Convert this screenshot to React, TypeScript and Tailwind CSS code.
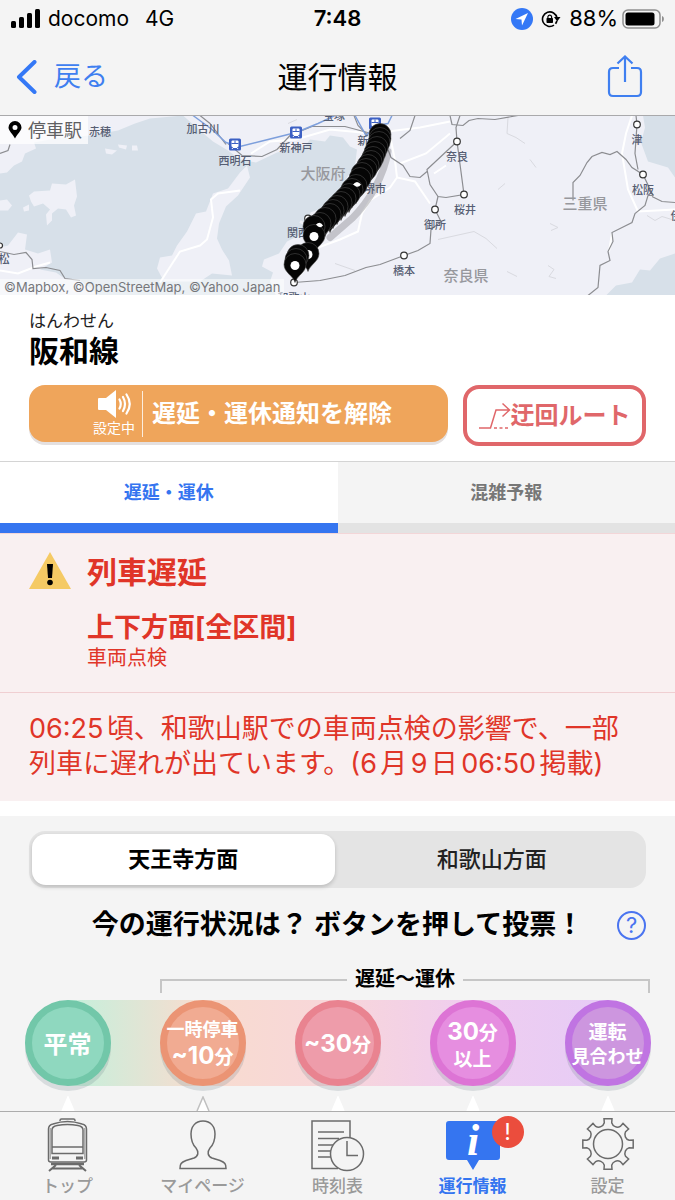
import { useState, type ReactNode } from 'react';

type Station = {
  name: string;
  x: number;
  y: number;
  textX: number;
  textY: number;
};

type Vote = {
  id: string;
  label: ReactNode;
  colors: string;
  selected?: boolean;
};

const stations: Station[] = [
  { name: '奈良', x: 457, y: 26, textX: 457, textY: 45 },
  { name: '桜井', x: 464, y: 79, textX: 465, textY: 98 },
  { name: '御所', x: 435, y: 94, textX: 435, textY: 113 },
  { name: '橋本', x: 404, y: 140, textX: 404, textY: 159 },
  { name: '津', x: 637, y: 9, textX: 637, textY: 28 },
  { name: '松阪', x: 643, y: 59, textX: 643, textY: 78 },
  { name: '和歌山', x: 294, y: 167, textX: 294, textY: 186 },
];

const bulletStations = [
  [235, 29],
  [296, 17],
  [375, 8],
];

// The line runs from Tennoji (top) down to Wakayama.
const pinRoute = [
  [380, 20], [380, 24], [379, 28], [377, 33], [375, 38], [373, 43], [371, 47],
  [368, 51], [366, 55], [362, 59], [360, 64], [356, 71], [352, 75], [349, 80],
  [345, 84], [341, 88], [337, 92], [333, 96], [330, 100], [325, 104], [320, 109],
  [314, 112], [314, 121], [308, 139], [298, 141], [296, 145], [295, 150],
];
const openPins = [22, 23, 26];

const votes: Vote[] = [
  {
    id: 'normal',
    label: <span className="text-[24px] leading-7">平常</span>,
    colors: 'border-[#72c7a9] bg-[#8fd8bf]',
  },
  {
    id: 'stop',
    label: (
      <>
        <span className="text-[18px] leading-6">一時停車</span>
        <span className="text-[24px] leading-7">
          ~10<span className="text-[19px]">分</span>
        </span>
      </>
    ),
    colors: 'border-[#eb9474] bg-[#f1ab92]',
    selected: true,
  },
  {
    id: 'under30',
    label: (
      <span className="text-[24px] leading-7">
        ~30<span className="text-[19px]">分</span>
      </span>
    ),
    colors: 'border-[#e98390] bg-[#ee9caa]',
  },
  {
    id: 'over30',
    label: (
      <>
        <span className="text-[24px] leading-7">
          30<span className="text-[19px]">分</span>
        </span>
        <span className="text-[19px] leading-6">以上</span>
      </>
    ),
    colors: 'border-[#dd74d5] bg-[#e68ee0]',
  },
  {
    id: 'suspended',
    label: (
      <>
        <span className="text-[19px] leading-6">運転</span>
        <span className="text-[18px] leading-6">見合わせ</span>
      </>
    ),
    colors: 'border-[#c074e2] bg-[#cd96df]',
  },
];

function StatusBar() {
  return (
    <div className="grid h-[37px] grid-cols-3 items-center px-[10px] text-[22px]">
      <div className="flex items-center gap-2 text-[21px]">
        <svg viewBox="0 0 30 20" className="h-5 w-[30px]" aria-hidden="true">
          <rect x="1" y="12" width="5" height="7" rx="1.5" />
          <rect x="9" y="8" width="5" height="11" rx="1.5" />
          <rect x="17" y="4" width="5" height="15" rx="1.5" />
          <rect x="25" y="0" width="5" height="19" rx="1.5" />
        </svg>
        <span>docomo</span>
        <span className="ml-2">4G</span>
      </div>
      <div className="text-center font-semibold">7:48</div>
      <div className="flex items-center justify-end gap-2">
        <svg viewBox="0 0 22 22" className="size-[22px] shrink-0" aria-hidden="true">
          <circle cx="11" cy="11" r="11" fill="#3478f6" />
          <path d="M17 5 L4.500 11 L10.500 11.500 L11 17.500 Z" fill="#fff" />
        </svg>
        <svg viewBox="0 0 20 18" className="h-[18px] w-5 shrink-0" fill="none" aria-hidden="true">
          <path d="M16 8 A7.300 7.300 0 1 0 13 15.200" stroke="#000" strokeWidth="1.600" />
          <path d="M15.800 11 A7.300 7.300 0 0 1 14.500 13.800" stroke="#000" strokeWidth="1.600" />
          <path d="M13 7 H19.500 L16.200 11.500 Z" fill="#000" />
          <rect x="5.500" y="8" width="6.500" height="5" rx="0.700" fill="#000" />
          <path d="M6.900 8.500 V6.600 A1.900 1.900 0 0 1 10.600 6.600 V8.500" stroke="#000" strokeWidth="1.200" />
        </svg>
        <div className="flex items-center">
          <span>88%</span>
          <svg viewBox="0 0 43 20" className="ml-1 h-5 w-[43px] shrink-0" aria-hidden="true">
            <rect x="1" y="1" width="37" height="18" rx="5" fill="none" stroke="#8e8e8e" strokeWidth="1.500" />
            <rect x="3.500" y="3.500" width="29" height="13" rx="2.500" />
            <path d="M40 7 C42.500 7.500 42.500 12.500 40 13 Z" fill="#8e8e8e" />
          </svg>
        </div>
      </div>
    </div>
  );
}

function NavBar() {
  return (
    <div className="grid h-[78px] grid-cols-3 items-center px-4 pt-0.5">
      <button type="button" className="flex items-center gap-4 text-[27px] text-[#3f7ff0]">
        <svg viewBox="0 0 22 34" className="h-[34px] w-[22px]" fill="none" aria-hidden="true">
          <path d="M18.500 2 L3 17 L18.500 32" stroke="#3478f6" strokeWidth="4" strokeLinecap="round" strokeLinejoin="round" />
        </svg>
        戻る
      </button>
      <h1 className="text-center text-[30px]">運行情報</h1>
      <button type="button" aria-label="共有" className="mr-4 justify-self-end">
        <svg viewBox="0 0 36 44" className="h-11 w-9" fill="none" stroke="#3f7ff0" strokeWidth="2.200" aria-hidden="true">
          <path d="M12 13 H6 Q2 13 2 17 V37 Q2 41 6 41 H30 Q34 41 34 37 V17 Q34 13 30 13 H24" />
          <path d="M18 27 V1.500 M10.500 8.500 L18 1.500 L25.500 8.500" />
        </svg>
      </button>
    </div>
  );
}

function MapPin({ x, y, open }: { x: number; y: number; open: boolean }) {
  return (
    <g transform={`translate(${x} ${y})`}>
      <path
        d="M0 17 C-2 10 -11 7 -11 -1 A11 11 0 0 1 11 -1 C11 7 2 10 0 17 Z"
        fill="#050505"
        stroke="#4b4b4b"
        strokeWidth="0.600"
      />
      {open && <circle r="4.500" fill="#fff" />}
    </g>
  );
}

function RouteMap() {
  return (
    <div className="relative h-[180px] overflow-hidden border-t border-[#a9a9ab] bg-[#eff0f7]">
      <svg
        viewBox="0 0 675 180"
        preserveAspectRatio="xMidYMid slice"
        className="block h-full w-full"
        role="img"
        aria-label="阪和線の停車駅"
      >
        <rect width="675" height="180" fill="#eff0f7" />

        {/* sea */}
        <g fill="#d7e0e9">
          <path d="M0 58 L7 57 L14 50 L22 46 L25 38 L36 33 L34 27 L60 22 L90 20 L118 15 L135 8 L150 3 L183 0 L200 15 L213 26 L228 35 L240 44 L256 47 L277 37 L290 34 L300 29 L304 32 L310 24 L325 26 L330 20 L343 22 L350 31 L357 34 L355 50 L347 62 L343 74 L336 82 L327 92 L310 110 L299 120 L287 126 L279 138 L264 144 L262 151 L273 157 L270 166 L276 180 L100 180 L80 165 L63 162 L56 157 L40 154 L52 147 L50 134 L38 138 L25 134 L27 119 L18 117 L8 130 L0 132 Z" />
          <path d="M643 0 L645 12 L641 27 L648 46 L668 52 L675 62 L675 0 Z" />
          <path d="M675 138 L660 143 L650 155 L640 154 L632 167 L616 170 L606 180 L675 180 Z" />
        </g>

        {/* islands */}
        <g fill="#eff0f7">
          <path d="M247 50 L240 57 L228 73 L213 78 L206 96 L196 98 L187 116 L177 130 L172 140 L160 142 L157 153 L164 166 L200 166 L212 158 L232 160 L229 145 L222 134 L217 123 L219 108 L226 91 L238 80 L250 62 Z" />
          <path d="M29 80 L34 76 L50 75 L52 68 L66 69 L75 64 L77 81 L74 90 L76 100 L71 102 L66 94 L58 93 L52 98 L52 105 L47 110 L46 99 L50 94 L43 88 L34 91 L31 86 Z" />
          <path d="M0 85 L7 84 L12 90 L8 95 L0 95 Z M23 92 L29 89 L29 95 L24 96 Z M105 33 L117 35 L112 39 L106 38 Z M118 29 L127 30 L126 34 L119 32 Z M132 30 L137 30 L138 35 L132 35 Z" />
        </g>
        <path d="M309 106 L312 98 L318 96 M300 106 L306 109" stroke="#eff0f7" strokeWidth="3" fill="none" />

        {/* main roads */}
        <g fill="none" stroke="#fff" strokeWidth="2">
          <path d="M240 75 L218 78 L211 84 L213 102 L207 124 L200 130 L180 136 L160 167" />
          <path d="M388 10 L395 45 L397 62 L415 66 L430 88" />
          <path d="M397 62 L390 72 L370 85 L362 98 L358 116 L340 124 L318 132 L300 160" />
          <path d="M251 38 L270 26 L296 24 L330 14 L372 18 L420 12 L450 6" />
          <path d="M400 48 L426 38 L450 18" />
          <path d="M632 0 L626 18 L622 38 L628 74 L638 96 L675 94" />
          <path d="M0 155 L18 158 L36 151 L50 147" />
          <path d="M434 58 L446 50 M612 118 L609 136" />
        </g>

        {/* faint ridges */}
        <g fill="none" stroke="#d9dae0" strokeWidth="1">
          <path d="M508 2 L507 18 L516 22 L525 28" />
          <path d="M550 108 L558 112 L551 115 M548 150 L554 154 L549 161 L556 163 M507 156 L517 161" />
          <path d="M438 124 L456 120 L474 116 L486 123 L497 133" />
          <path d="M530 44 L536 52 M498 74 L505 68" />
          <path d="M335 148 L355 155 M288 8 L297 4" />
          <path d="M647 100 L655 105 L662 101 L675 105" />
        </g>

        {/* railways */}
        <g fill="none" stroke="#8c8d91" strokeWidth="1.200">
          <path d="M450 0 L452 9 L463 10 L469 5 L478 3 L495 4 L518 0" />
          <path d="M460 0 L456 12 L457 26 L464 79 L446 82 L438 81 L430 69 L427 54 L457 26" />
          <path d="M438 81 L435 94 L441 106 L431 114 L430 128 L418 135 L404 140 L380 149 L366 152 L345 160 L320 165 L294 167" />
          <path d="M427 56 L420 62 L410 61 L403 50 L391 42 L388 34" />
          <path d="M400 23 L410 15 L415 0" />
          <path d="M228 28 L242 40 L262 41 L277 34 L290 20 L312 11 L345 11 L375 19" />
          <path d="M573 85 L573 67 L580 60 L587 47 L592 41 L602 37 L610 39 L617 36 L626 44 L632 52 L643 59 L653 80 L648 80 L645 90 L635 98 L632 107 L612 117 L613 126 L608 136 L610 145 L600 150 L598 172 L588 180" />
          <path d="M636 0 L637 9 L635 38 L638 54 M652 81 L662 86 L675 87" />
          <path d="M0 136 L14 139 L26 137 L32 144 L33 153 L46 152 L60 155 L65 163 L80 165" />
          <path d="M0 38 L8 35 L10 29 M200 0 L210 8 L226 29" />
          <path d="M354 0 L358 10 L368 20" />
        </g>
        <g fill="none" stroke="#7d9fdc" strokeWidth="1.400">
          <path d="M193 0 L212 14 L226 27 L240 31 L268 24 L296 17 L318 8 L335 0" />
          <path d="M355 0 L366 20 L376 10 L388 8 L392 0" />
        </g>

        {/* prefectures */}
        <g fill="#97989d" fontSize="15" fontWeight="500" textAnchor="middle" fontFamily="'Noto Sans CJK JP', sans-serif">
          <text x="323" y="63">大阪府</text>
          <text x="585" y="93">三重県</text>
          <text x="466" y="165">奈良県</text>
        </g>

        {/* stations */}
        <g fill="#565e73" fontSize="11" fontWeight="500" textAnchor="middle" fontFamily="'Noto Sans CJK JP', sans-serif">
          <text x="100" y="20">赤穂</text>
          <text x="203" y="17">加古川</text>
          <text x="235" y="49">西明石</text>
          <text x="296" y="36">新神戸</text>
          <text x="334" y="4">宝塚</text>
          <text x="363" y="29">新</text>
          <text x="375" y="77">堺市</text>
          <text x="298" y="121">関西</text>
          <text x="4" y="147">松</text>
          <text x="676" y="104">伊</text>
          {stations.map((station) => (
            <text key={station.name} x={station.textX} y={station.textY}>
              {station.name}
            </text>
          ))}
        </g>
        <g fill="#fff" stroke="#333" strokeWidth="1.200">
          {stations.map((station) => (
            <circle key={station.name} cx={station.x} cy={station.y} r="3.300" />
          ))}
          <circle cx="308" cy="103" r="3.300" />
          <circle cx="0" cy="130" r="2.500" />
        </g>
        {bulletStations.map(([x, y]) => (
          <g key={x} transform={`translate(${x} ${y})`}>
            <rect x="-6" y="-6" width="12" height="12" rx="1.500" fill="#3c60c4" />
            <rect x="-3.500" y="-4" width="7" height="6.500" rx="1" fill="#fff" />
            <path d="M-3.500 -1 H3.500 M0 -4 V-1" stroke="#3c60c4" />
            <path d="M-3 4.500 L-2 3 H2 L3 4.500" stroke="#fff" fill="none" />
          </g>
        ))}

        <path
          d="M388 36 C384 60 370 85 352 103 L330 122"
          fill="none"
          stroke="#5c5c62"
          strokeOpacity="0.300"
          strokeWidth="7"
          strokeLinecap="round"
        />
        {pinRoute.map(([x, y], index) => (
          <MapPin key={index} x={x} y={y} open={openPins.includes(index)} />
        ))}
        {/* slivers of white left between overlapping pins */}
        <path d="M353 69 Q357 64 361 69 Q359 72 356 71 Z M316 109 Q320 105 323 110 Q321 113 318 111 Z" fill="#fff" />
      </svg>

      <div className="absolute left-0 top-0 flex h-7 items-center gap-1.5 bg-white/75 pl-2 pr-1.5 text-[18px] text-[#5f5f62]">
        <svg viewBox="0 0 14 18" className="h-[18px] w-3.5" aria-hidden="true">
          <path fill="#000" fillRule="evenodd" d="M7 0 A6.500 6.500 0 0 0 0.500 6.500 C0.500 10 5 13 7 17.500 C9 13 13.500 10 13.500 6.500 A6.500 6.500 0 0 0 7 0 Z M7 4 A2.500 2.500 0 1 1 7 9 A2.500 2.500 0 1 1 7 4 Z" />
        </svg>
        停車駅
      </div>
      <div className="absolute bottom-0 left-0 bg-white/50 pl-1 pr-1 text-[13px] leading-4 text-[#76777b]">
        ©Mapbox, ©OpenStreetMap, ©Yahoo Japan
      </div>
    </div>
  );
}

function LineHeader() {
  return (
    <section className="px-[29px] pb-[15px] pt-[14px]">
      <p className="text-[17px] leading-6 text-[#222]">はんわせん</p>
      <h2 className="text-[30px] font-bold leading-9">阪和線</h2>
      <div className="mt-4 flex items-start gap-[15px]">
        <button
          type="button"
          className="flex h-[57px] flex-1 items-center justify-center gap-[7px] rounded-2xl bg-[#efa55b] pl-2 text-white shadow-[0_3px_0_#e4e0e0]"
        >
          <span className="flex flex-col items-center">
            <svg viewBox="0 0 34 28" className="h-7 w-[34px]" fill="none" stroke="#fff" strokeWidth="2.200" strokeLinecap="round" aria-hidden="true">
              <path d="M2 8 H9 L19 0 V28 L9 20 H2 Q1 20 1 19 V9 Q1 8 2 8 Z" fill="#fff" stroke="none" />
              <path d="M22.500 9.500 Q25 14 22.500 18.500 M26 7 Q30 14 26 21 M29.500 4.500 Q36 14 29.500 23.500" />
            </svg>
            <span className="text-[14px] leading-5">設定中</span>
          </span>
          <span className="h-[46px] w-px bg-white/80" />
          <span className="pl-0.5 text-[24px] font-bold">遅延・運休通知を解除</span>
        </button>
        <button
          type="button"
          className="flex h-[61px] w-[183px] items-center justify-center rounded-2xl border-4 border-[#e0676a] text-[24px] font-bold text-[#e0676a]"
        >
          <svg viewBox="0 0 32 28" className="h-7 w-8" fill="none" stroke="currentColor" strokeWidth="1.500" aria-hidden="true">
            <path d="M0 26 H11.500 L17 8 H30 M23.500 1.500 L30.500 8 L23.500 14.500" />
            <path d="M15 26 H30" strokeDasharray="3 2.500" />
          </svg>
          迂回ルート
        </button>
      </div>
    </section>
  );
}

function InfoTabs() {
  const [active, setActive] = useState(0);

  return (
    <div role="tablist" className="flex border-t border-[#d4d4d4]">
      {['遅延・運休', '混雑予報'].map((tab, index) => (
        <button
          key={tab}
          type="button"
          role="tab"
          aria-selected={active === index}
          onClick={() => setActive(index)}
          className={`h-[71px] flex-1 border-b-[10px] text-[18px] ${
            active === index
              ? 'border-[#3575f0] bg-white font-bold text-[#3575f0]'
              : 'border-[#e3e3e3] bg-[#f4f4f4] font-bold text-[#777]'
          }`}
        >
          {tab}
        </button>
      ))}
    </div>
  );
}

function DelayNotice() {
  return (
    <section className="border-t border-[#f3d6d8] bg-[#f9f0f1] text-[#e03528]">
      <div className="flex gap-4 border-b border-[#f0cfd2] px-[29px] pb-[22px] pt-[18px]">
        <svg viewBox="0 0 42 37" className="h-[37px] w-[42px] shrink-0" aria-hidden="true">
          <path d="M21 0 L42 37 H0 Z" fill="#f5ca64" />
          <path d="M18 12 H24 L23 26 H19 Z" fill="#000" />
          <circle cx="21" cy="30.500" r="2.800" fill="#000" />
        </svg>
        <div>
          <h3 className="text-[30px] font-bold leading-10">列車遅延</h3>
          <p className="mt-[18px] text-[27px] font-bold leading-9">上下方面[全区間]</p>
          <p className="text-[20px] leading-6">車両点検</p>
        </div>
      </div>
      <p className="pb-5 pl-[29px] pr-12 pt-[18px] text-[27px] leading-[35px] [text-autospace:normal]">
        06:25頃、和歌山駅での車両点検の影響で、一部列車に遅れが出ています。(6月9日06:50掲載)
      </p>
    </section>
  );
}

function DirectionSwitch() {
  const [direction, setDirection] = useState('天王寺方面');

  return (
    <div className="flex h-[57px] gap-1.5 rounded-2xl bg-[#e4e4e4] p-[3px]">
      {['天王寺方面', '和歌山方面'].map((name) => (
        <button
          key={name}
          type="button"
          aria-pressed={direction === name}
          onClick={() => setDirection(name)}
          className={`flex-1 rounded-[14px] text-[22px] ${
            direction === name
              ? 'bg-white font-bold shadow-[0_2px_4px_rgba(0,0,0,0.18)]'
              : 'font-medium text-[#222]'
          }`}
        >
          {name}
        </button>
      ))}
    </div>
  );
}

function VotePanel() {
  return (
    <section className="flex-1 overflow-hidden bg-[#f4f4f4] pt-[15px]">
      <div className="px-[29px]">
        <DirectionSwitch />
        <div className="mt-4 grid grid-cols-[29px_1fr_29px] items-center">
          <h3 className="col-start-2 text-center text-[27px] font-bold leading-[42px]">
            今の運行状況は？ ボタンを押して投票！
          </h3>
          <button
            type="button"
            aria-label="ヘルプ"
            className="flex size-[29px] items-center justify-center rounded-full border-2 border-[#4a74f0] text-[22px] leading-none text-[#4a74f0]"
          >
            ?
          </button>
        </div>
      </div>

      <div className="ml-[160px] mr-[25px] mt-[19px] flex h-7 items-center">
        <span className="mt-[13px] h-3.5 flex-1 border-l-2 border-t-2 border-[#c6c6c6]" />
        <span className="px-2 text-[20px] font-bold leading-7">遅延〜運休</span>
        <span className="mt-[13px] h-3.5 flex-1 border-r-2 border-t-2 border-[#c6c6c6]" />
      </div>

      <div className="relative mt-[7px]">
        <div className="absolute inset-x-[67px] top-0 h-[86px] bg-[linear-gradient(90deg,#c4f0dc,#f8dccf_25%,#f8d6da_50%,#efcdf0_75%,#e6ccf6)]" />
        <div className="relative grid grid-cols-5">
          {votes.map((vote) => (
            <div key={vote.id} className="flex flex-col items-center">
              <button
                type="button"
                className={`flex size-[86px] flex-col items-center justify-center whitespace-nowrap rounded-full border-[7px] pt-1 font-bold text-white shadow-[0_5px_0_rgba(90,110,120,0.18)] ${vote.colors}`}
              >
                {vote.label}
              </button>
              <svg viewBox="0 0 14 15" className="mt-2.5 h-[15px] w-3.5" aria-hidden="true">
                <path
                  d="M1 15 L7 1 L13 15"
                  fill="#fff"
                  stroke={vote.selected ? '#c0c0c0' : '#fff'}
                  strokeWidth="1.500"
                />
              </svg>
            </div>
          ))}
        </div>
      </div>
    </section>
  );
}

function TrainIcon() {
  return (
    <svg viewBox="0 0 42 56" className="h-14 w-[42px]" fill="none" stroke="#6b6b6b" strokeWidth="1.500">
      <path d="M13 5 V4.500 Q13 3 14.500 3 H26.500 Q28 3 28 4.500 V5" />
      <path d="M1.500 44 V13 Q1.500 9 6 8 Q20.500 3 35 8 Q39.500 9 39.500 13 V44 Q39.500 46 37 46 H4 Q1.500 46 1.500 44 Z" />
      <path d="M5 37.500 V14 Q5 10.500 10 9.500 Q20.500 7.500 31 9.500 Q36 10.500 36 14 V37.500 Z M5 31 H36" />
      <path d="M3.200 12 V43 M37.800 12 V43" stroke="#aaa" />
      <path d="M5 42 H12 M29 42 H36" strokeWidth="3" />
      <path d="M4 48 H37" strokeWidth="2.500" />
      <path d="M9 49 L2 55 M32 49 L39 55 M5 52.500 H36" strokeWidth="2" />
    </svg>
  );
}

function PersonIcon() {
  return (
    <svg viewBox="0 0 48 56" className="h-14 w-12" fill="none" stroke="#6b6b6b" strokeWidth="1.500">
      <path d="M24 5 C16 5 12 11 12 18 C12 24 14 29 17 32 C20 36 19.500 40 15 42 L7 44.500 C2 46.500 1 48 1 52.500 H47 C47 48 46 46.500 41 44.500 L33 42 C28.500 40 28 36 31 32 C34 29 36 24 36 18 C36 11 32 5 24 5 Z" />
    </svg>
  );
}

function TimetableIcon() {
  return (
    <svg viewBox="0 0 54 56" className="h-14 w-[54px]" fill="none" stroke="#6b6b6b" strokeWidth="1.500">
      <path d="M39 22 V5 H1 V52.500 H27" />
      <path d="M7 16 H33 M7 22.500 H28 M7 29 H22 M7 35 H20 M7 41 H20" />
      <circle cx="36" cy="38" r="16.500" fill="#f4f4f4" />
      <path d="M36 25 V39.500 H47" />
    </svg>
  );
}

function InfoIcon() {
  return (
    <svg viewBox="0 0 54 56" className="h-14 w-[54px]">
      <path d="M3 5 H51 Q54 5 54 8 V41 Q54 44 51 44 H33 L27 54 L21 44 H3 Q0 44 0 41 V8 Q0 5 3 5 Z" fill="#3575f0" />
      <text x="27" y="39" fill="#fff" fontSize="44" fontWeight="700" fontStyle="italic" textAnchor="middle" fontFamily="'Liberation Serif', serif">
        i
      </text>
    </svg>
  );
}

function GearIcon() {
  const angles = [0, 45, 90, 135, 180, 225, 270, 315];

  // Each tooth is flat on top, with a round notch cut in before the next one.
  const points = angles
    .map((angle, index) => {
      const at = (radius: number, degrees: number) => {
        const rad = (degrees * Math.PI) / 180;
        return `${(27 + radius * Math.sin(rad)).toFixed(1)} ${(27 - radius * Math.cos(rad)).toFixed(1)}`;
      };
      return `${index === 0 ? 'M' : 'L'}${at(25.5, angle - 9)} L${at(25.5, angle + 9)} L${at(21.5, angle + 10)} A6 6 0 0 0 ${at(21.5, angle + 35)}`;
    })
    .join(' ');

  return (
    <svg viewBox="0 0 54 56" className="h-14 w-[54px]" fill="none" stroke="#6b6b6b" strokeWidth="1.500">
      <g transform="translate(0 1)">
        <path d={`${points} Z`} />
        <circle cx="27" cy="27" r="14.500" />
      </g>
    </svg>
  );
}

const tabs = [
  { label: 'トップ', icon: <TrainIcon /> },
  { label: 'マイページ', icon: <PersonIcon /> },
  { label: '時刻表', icon: <TimetableIcon /> },
  { label: '運行情報', icon: <InfoIcon />, active: true },
  { label: '設定', icon: <GearIcon /> },
];

function TabBar() {
  return (
    <nav className="sticky bottom-0 z-10 grid h-[89px] grid-cols-5 border-t border-[#acacac] bg-[#f4f4f4]">
      {tabs.map((tab) => (
        <a
          key={tab.label}
          href="#"
          aria-current={tab.active ? 'page' : undefined}
          className={`flex flex-col items-center pt-1 text-[17px] leading-7 ${
            tab.active ? 'font-bold text-[#3575f0]' : 'font-medium text-[#9a9a9a]'
          }`}
        >
          <span className="relative">
            {tab.icon}
            {tab.active && (
              <span className="absolute -right-6 top-0 flex size-8 items-center justify-center rounded-full bg-[#eb4d3d] text-[23px] font-normal text-white">
                !
              </span>
            )}
          </span>
          {tab.label}
        </a>
      ))}
    </nav>
  );
}

export default function App() {
  return (
    <div className="flex min-h-screen flex-col bg-white font-[Inter,'Noto_Sans_CJK_JP',sans-serif] text-black">
      <header className="bg-[#f4f4f4]">
        <StatusBar />
        <NavBar />
      </header>
      <main className="flex flex-1 flex-col">
        <RouteMap />
        <LineHeader />
        <InfoTabs />
        <DelayNotice />
        <div className="h-[15px] bg-white" />
        <VotePanel />
      </main>
      <TabBar />
    </div>
  );
}
